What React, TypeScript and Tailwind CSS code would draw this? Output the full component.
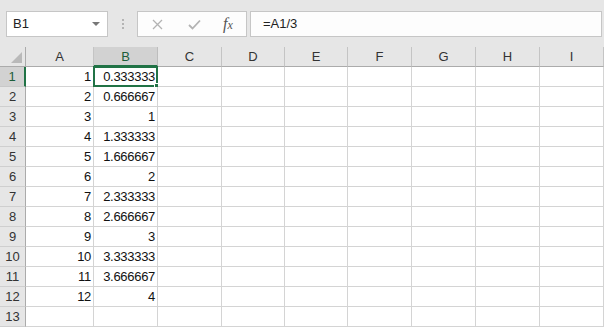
const cols = [
  { name: 'A', w: 'w-[68px]' },
  { name: 'B', w: 'w-[64px]' },
  { name: 'C', w: 'w-[64px]' },
  { name: 'D', w: 'w-[63px]' },
  { name: 'E', w: 'w-[63px]' },
  { name: 'F', w: 'w-[64px]' },
  { name: 'G', w: 'w-[64px]' },
  { name: 'H', w: 'w-[64px]' },
  { name: 'I', w: 'w-[64px]' },
];

const valuesB = [
  '0.333333', '0.666667', '1', '1.333333', '1.666667', '2',
  '2.333333', '2.666667', '3', '3.333333', '3.666667', '4',
];

function Toolbar() {
  return (
    <div className="flex h-[47px] items-start bg-[#e6e6e6] pt-[11px]">
      {/* name box */}
      <div className="ml-[6px] flex h-[26px] w-[102px] items-center justify-between border border-[#c6c6c6] bg-white pl-[6px] pr-[7px]">
        <span className="text-[13px] text-[#222]">B1</span>
        <span className="h-0 w-0 border-x-[4px] border-t-[4px] border-x-transparent border-t-[#777]" />
      </div>
      {/* grip dots */}
      <div className="ml-[14px] mt-[8px] flex flex-col gap-[2px]">
        <span className="h-[2px] w-[2px] bg-[#b4b4b4]" />
        <span className="h-[2px] w-[2px] bg-[#b4b4b4]" />
        <span className="h-[2px] w-[2px] bg-[#b4b4b4]" />
      </div>
      {/* formula buttons */}
      <div className="ml-[13px] flex h-[26px] w-[110px] items-center border border-[#c6c6c6] bg-[#fdfdfd]">
        <svg className="ml-[14px]" width="11" height="11" viewBox="0 0 11 11">
          <path d="M1 1 L10 10 M10 1 L1 10" stroke="#b3b3b3" strokeWidth="1.3" fill="none" />
        </svg>
        <svg className="ml-[25px]" width="13" height="11" viewBox="0 0 13 11">
          <path d="M1 6 L4.5 9.5 L12 1.5" stroke="#b3b3b3" strokeWidth="1.8" fill="none" />
        </svg>
        <span className="ml-[22px] font-['Liberation_Serif',serif] text-[16px] italic text-[#555]">
          f<span className="text-[12px]">x</span>
        </span>
      </div>
      {/* formula input */}
      <div className="ml-[3px] flex h-[26px] w-[352px] items-center border border-[#c6c6c6] bg-[#fdfdfd] pl-[12px]">
        <span className="text-[13px] text-[#222]">=A1/3</span>
      </div>
    </div>
  );
}

function HeaderRow() {
  return (
    <div className="flex h-[20px]">
      <div className="relative w-[26px] border-r border-b border-[#ababab] bg-[#e6e6e6]">
        <svg className="absolute right-[3px] bottom-[3px]" width="11" height="11" viewBox="0 0 11 11">
          <polygon points="11,0 11,11 0,11" fill="#b9b9b9" />
        </svg>
      </div>
      {cols.map((c) =>
        c.name === 'B' ? (
          <div
            key={c.name}
            className={`${c.w} flex items-center justify-center border-r border-r-[#bdbdbd] border-b-2 border-b-[#217346] bg-[#d2d2d2] pt-[1px] text-[13px] text-[#1d5e3a]`}
          >
            {c.name}
          </div>
        ) : (
          <div
            key={c.name}
            className={`${c.w} flex items-center justify-center border-r border-r-[#c4c4c4] border-b border-b-[#ababab] bg-[#e6e6e6] text-[13px] text-[#333]`}
          >
            {c.name}
          </div>
        ),
      )}
    </div>
  );
}

function DataRow({ n }: { n: number }) {
  const a = n <= 12 ? String(n) : '';
  const b = n <= 12 ? valuesB[n - 1] : '';
  const selected = n === 1;
  return (
    <div className="flex h-[20px]">
      {selected ? (
        <div className="flex w-[26px] items-center justify-center border-r-2 border-r-[#217346] border-b border-b-[#c8c8c8] bg-[#d2d2d2] text-[13px] text-[#1d5e3a]">
          {n}
        </div>
      ) : (
        <div className="flex w-[26px] items-center justify-center border-r border-r-[#ababab] border-b border-b-[#cfcfcf] bg-[#e6e6e6] text-[13px] text-[#333]">
          {n}
        </div>
      )}
      {cols.map((c) => {
        const text = c.name === 'A' ? a : c.name === 'B' ? b : '';
        return (
          <div
            key={c.name}
            className={`${c.w} relative flex items-center justify-end border-r border-b border-[#d4d4d4] bg-white pr-[2px] text-[13px] tracking-[-0.3px] text-[#111]`}
          >
            {text}
            {selected && c.name === 'B' && (
              <>
                <span className="pointer-events-none absolute -top-[1px] -left-[1px] -right-[1px] -bottom-[1px] border-2 border-[#217346]" />
                <span className="absolute -right-[3px] -bottom-[3px] h-[6px] w-[6px] border border-white bg-[#217346]" />
              </>
            )}
          </div>
        );
      })}
    </div>
  );
}

export default function App() {
  const rows = Array.from({ length: 13 }, (_, i) => i + 1);
  return (
    <div className="h-[327px] w-[604px] overflow-hidden bg-white font-['Liberation_Sans',Arial,sans-serif]">
      <Toolbar />
      <HeaderRow />
      {rows.map((n) => (
        <DataRow key={n} n={n} />
      ))}
    </div>
  );
}
